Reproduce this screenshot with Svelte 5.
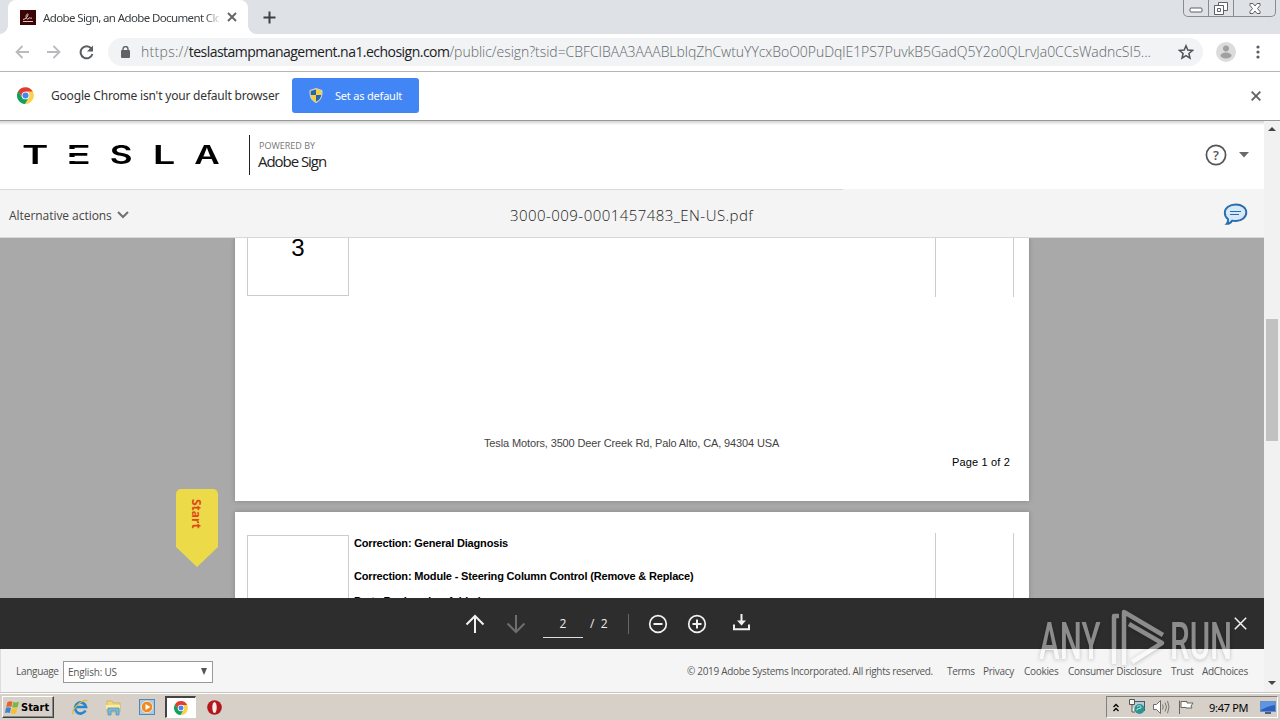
<script>
  const footerLinks = [
    { label: 'Terms', width: 26 },
    { label: 'Privacy', width: 31 },
    { label: 'Cookies', width: 34 },
    { label: 'Consumer Disclosure', width: 93 },
    { label: 'Trust', width: 21 },
    { label: 'AdChoices', width: 47 }
  ];
  const host = 'teslastampmanagement.na1.echosign.com';
  const path = '/public/esign?tsid=CBFCIBAA3AAABLblqZhCwtuYYcxBoO0PuDqlE1PS7PuvkB5GadQ5Y2o0QLrvJa0CCsWadncSI5...';
  const wordmark = ['T', 'E', 'S', 'L', 'A'];
</script>

{#snippet chromeLogo(size)}
  <svg width={size} height={size} viewBox="0 0 18 18">
    <path d="M9 5h7.9A9 9 0 0 0 1.2 4.5L5.5 11Z" fill="#e33b2e" />
    <path d="m12.5 11-4 7A9 9 0 0 0 16.900 5H9Z" fill="#fcd04b" />
    <path d="M5.500 11 1.300 4.300A9 9 0 0 0 8.500 18l4-7Z" fill="#159f5c" />
    <circle cx="9" cy="9" r="4.100" fill="#fff" />
    <circle cx="9" cy="9" r="3.200" fill="#4285f4" />
  </svg>
{/snippet}

<div class="screen">
  <div class="tabstrip">
    <div class="tab">
      <svg class="favicon" width="16" height="15" viewBox="0 0 16 15">
        <rect width="16" height="15" fill="#3b0505" />
        <path d="M3 9.500c3 0 5-3.500 5-5s-2 0-2 2 2 4 3 1.500c1-1 1 1 3 0M3 11.500h10" fill="none" stroke="#e9c5c0" />
      </svg>
      <span class="tab-title">Adobe Sign, an Adobe Document Clo</span>
      <svg class="tab-close" width="10" height="10" viewBox="0 0 10 10">
        <path d="m1 1 8 8M9 1 1 9" stroke="#5f6368" stroke-width="1.800" />
      </svg>
    </div>
    <svg class="tab-add" width="13" height="13" viewBox="0 0 13 13">
      <path d="M6.500.5v12M.5 6.500h12" stroke="#3c4043" stroke-width="2" />
    </svg>
    <div class="window-buttons">
      <span class="win min"><svg width="14" height="6" viewBox="0 0 14 6"><rect x="1" y="1" width="12" height="4" rx="1" fill="#fff" stroke="#5c6068" /></svg></span>
      <span class="win max"><svg width="14" height="13" viewBox="0 0 14 13"><g fill="#fff" stroke="#5c6068"><path d="M4.500.5h9v8h-9z" /><path d="M.5 3.500h9v9h-9z" /><path d="M3.500 6.500h3v3h-3z" /></g></svg></span>
      <span class="win close"><svg width="12" height="11" viewBox="0 0 12 11"><path d="M1 .5h3l2 2.500 2-2.500h3v2L8.500 5.500 11 8.500v2H8L6 8l-2 2.500H1v-2l2.500-3L1 2.500z" fill="#fff" stroke="#5c6068" /></svg></span>
    </div>
  </div>

  <div class="toolbar">
    <svg class="nav-back" width="14" height="14" viewBox="0 0 14 14"><path d="M14 7H1.500M7.500 1l-6 6 6 6" fill="none" stroke="#b9bbbe" stroke-width="1.800" /></svg>
    <svg class="nav-forward" width="14" height="14" viewBox="0 0 14 14"><path d="M0 7h12.500M6.500 1l6 6-6 6" fill="none" stroke="#b9bbbe" stroke-width="1.800" /></svg>
    <svg class="nav-reload" width="15" height="15" viewBox="0 0 15 15"><path d="M12.300 3.500A6 6 0 1 0 13.400 9" fill="none" stroke="#5a5d61" stroke-width="2" /><path d="M14 .5v6H8z" fill="#5a5d61" /></svg>
    <div class="omnibox">
      <svg class="lock" width="9" height="12" viewBox="0 0 9 12"><rect y="4" width="9" height="8" rx="1" fill="#5f6368" /><path d="M2 5V3a2.500 2.500 0 0 1 5 0v2" fill="none" stroke="#5f6368" stroke-width="1.400" /></svg>
      <span class="url"><span class="scheme">https://</span><span class="host">{host}</span><span class="path">{path}</span></span>
      <svg class="bookmark" width="16" height="16" viewBox="0 0 16 16"><path d="m8 1.800 1.800 4.300 4.700.4-3.600 3 1.100 4.600L8 11.700l-4 2.400 1.100-4.600-3.600-3 4.700-.4z" fill="none" stroke="#505357" stroke-width="1.500" /></svg>
    </div>
    <svg class="profile" width="20" height="20" viewBox="0 0 20 20"><circle cx="10" cy="10" r="10" fill="#dcdcdc" /><circle cx="10" cy="6.500" r="3" fill="#a0a0a0" /><ellipse cx="10" cy="13.500" rx="5.500" ry="3" fill="#a0a0a0" /></svg>
    <svg class="more" width="4" height="14" viewBox="0 0 4 14"><g fill="#5a5d61"><circle cx="2" cy="2" r="1.600" /><circle cx="2" cy="7" r="1.600" /><circle cx="2" cy="12" r="1.600" /></g></svg>
  </div>

  <div class="infobar">
    {@render chromeLogo(17)}
    <span class="infobar-text">Google Chrome isn't your default browser</span>
    <button class="default-button">
      <svg width="14" height="15" viewBox="0 0 14 15">
        <path d="M7 .5 13 2.500c.5 6-1.500 10-6 12C2.500 12.500.5 8.500 1 2.500z" fill="#f5d13d" stroke="#cfd5da" />
        <path d="M7 1.500V7H1.700L1.800 3zM7 7h5.300c-.5 3-2.300 5.300-5.300 6.500z" fill="#2864b4" />
      </svg>
      <span>Set as default</span>
    </button>
    <svg class="infobar-close" width="10" height="10" viewBox="0 0 10 10"><path d="m.7.700 8.600 8.600M9.300.7.7 9.300" stroke="#5f6368" stroke-width="1.900" /></svg>
  </div>

  <div class="content">
    <div class="app">
      <header class="brand-bar">
        <div class="wordmark" aria-label="Tesla">
          {#each wordmark as letter}
            <span class="letter letter-{letter}"><b>{letter}</b></span>
          {/each}
        </div>
        <div class="powered">
          <span class="powered-by">POWERED BY</span>
          <span class="powered-name">Adobe Sign</span>
        </div>
        <svg class="help" width="22" height="22" viewBox="0 0 22 22"><circle cx="11" cy="11" r="9.600" fill="none" stroke="#555" stroke-width="1.700" /><text x="11" y="15.500" text-anchor="middle">?</text></svg>
        <svg class="caret" width="10" height="6" viewBox="0 0 10 6"><path d="M0 0h10L5 5.500z" fill="#6a6a6a" /></svg>
      </header>

      <div class="doc-bar">
        <span class="alt-actions">Alternative actions</span>
        <svg class="chevron" width="12" height="8" viewBox="0 0 12 8"><path d="m1 1 5 5 5-5" fill="none" stroke="#707070" stroke-width="2" /></svg>
        <span class="doc-name">3000-009-0001457483_EN-US.pdf</span>
        <svg class="comment" width="25" height="23" viewBox="0 0 25 23">
          <path d="M12.800 1.500c6 0 10.500 3.400 10.500 8s-4.500 8.300-10.500 8.500c-1.500 0-2.500 0-3.600-.4-1.500 2.200-2.700 3.400-5.500 3.300 1.300-1.300 1.700-2.700 1.400-4.700-2-1.500-3.300-3.900-3.300-6.400 0-4.800 4.800-8.300 11-8.300z" fill="#d5e9fb" stroke="#2b6dab" stroke-width="1.900" />
          <path d="M7 8.500h11M7 11.500h9" stroke="#2f6ba4" stroke-width="1.200" />
        </svg>
      </div>

      <main class="viewer">
        <div class="page page-one">
          <div class="row">
            <div class="item-number">3</div>
            <div class="side-column"></div>
          </div>
          <p class="address">Tesla Motors, 3500 Deer Creek Rd, Palo Alto, CA, 94304 USA</p>
          <p class="page-number">Page 1 of 2</p>
        </div>
        <div class="page page-two">
          <div class="row">
            <div class="item-number"></div>
            <div class="corrections">
              <p class="c1">Correction: General Diagnosis</p>
              <p class="c2">Correction: Module - Steering Column Control (Remove &amp; Replace)</p>
              <p class="c3">Parts Replaced or Added</p>
            </div>
            <div class="side-column"></div>
          </div>
        </div>
        <div class="start-flag">
          <svg width="42" height="78" viewBox="0 0 42 78"><path d="M5 0h32a5 5 0 0 1 5 5v53L21 78 0 58V5a5 5 0 0 1 5-5z" fill="#edda48" /></svg>
          <span>Start</span>
        </div>
      </main>

      <div class="pager">
        <svg class="up" width="20" height="20" viewBox="0 0 20 20"><path d="M10 19V2M1.500 10.500 10 2l8.500 8.500" fill="none" stroke="#f2f2f2" stroke-width="2" /></svg>
        <svg class="down" width="20" height="20" viewBox="0 0 20 20"><path d="M10 1v17M1.500 9.500 10 18l8.500-8.500" fill="none" stroke="#6e6e6e" stroke-width="2" /></svg>
        <span class="page-input">2</span>
        <span class="page-total">/&nbsp; 2</span>
        <span class="divider"></span>
        <svg class="zoom-out" width="20" height="20" viewBox="0 0 20 20"><circle cx="10" cy="10" r="8.300" fill="none" stroke="#f2f2f2" stroke-width="1.700" /><path d="M5.500 10h9" stroke="#f2f2f2" stroke-width="2" /></svg>
        <svg class="zoom-in" width="20" height="20" viewBox="0 0 20 20"><circle cx="10" cy="10" r="8.300" fill="none" stroke="#f2f2f2" stroke-width="1.700" /><path d="M5.500 10h9M10 5.500v9" stroke="#f2f2f2" stroke-width="2" /></svg>
        <svg class="download" width="17" height="17" viewBox="0 0 17 17"><path d="M1 10.500v4.800h15v-4.800M8.500 0v8" fill="none" stroke="#f2f2f2" stroke-width="2" /><path d="M4 6.500h9l-4.500 5z" fill="#f2f2f2" /></svg>
        <svg class="pager-close" width="13" height="13" viewBox="0 0 13 13"><path d="m.8.800 11.400 11.400M12.200.8.800 12.200" stroke="#f4f4f4" stroke-width="1.500" /></svg>
      </div>

      <footer class="site-footer">
        <span class="language-label">Language</span>
        <div class="language-select">
          <span>English: US</span>
          <svg width="6" height="7" viewBox="0 0 6 7"><path d="M0 0h6L3 7z" fill="#555" /></svg>
        </div>
        <span class="copyright">© 2019 Adobe Systems Incorporated. All rights reserved.</span>
        <nav>
          {#each footerLinks as link}
            <span style="width: {link.width}px">{link.label}</span>
          {/each}
        </nav>
      </footer>
    </div>

    <div class="scrollbar">
      <svg width="8" height="4" viewBox="0 0 8 4"><path d="M0 4h8L4 0z" fill="#454545" /></svg>
      <div class="thumb"></div>
      <svg class="scroll-down" width="8" height="4" viewBox="0 0 8 4"><path d="M0 0h8L4 4z" fill="#454545" /></svg>
    </div>
  </div>

  <div class="taskbar">
    <div class="start-button">
      <svg width="16" height="15" viewBox="0 0 16 15">
        <path d="M2.500 2Q5 .5 7.500 1.700L6.300 7Q4 6 1.200 7z" fill="#e8622d" />
        <path d="M8.300 2Q11 3 14 1.700L12.700 7Q10 8 7.200 7.200z" fill="#7ab843" />
        <path d="M1 7.800Q3.500 6.800 6 8L4.800 13Q2.500 12 0 13z" fill="#3b83cc" />
        <path d="M7 8.200Q9.500 9 12.400 8L11.200 13.200Q8.500 14.300 5.700 13.200z" fill="#f5c22e" />
      </svg>
      <span>Start</span>
    </div>
    <svg class="launch ie" width="17" height="17" viewBox="0 0 17 17">
      <path d="M13.500 11.500A5.500 5.500 0 1 1 14 8H4" fill="none" stroke="#2487d2" stroke-width="2.700" />
      <path d="M1.500 15C-1.500 11 11-1 15.500 2" fill="none" stroke="#e1b93c" stroke-width="1.300" />
    </svg>
    <svg class="launch folder" width="17" height="17" viewBox="0 0 17 17">
      <path d="M2 2h5l1 2h7v9H2z" fill="#f2d874" stroke="#c9a94b" stroke-width=".7" />
      <path d="M1 6h14v4H1z" fill="#faeaa4" />
      <path d="M3 16V9h11v7h-3v-4H6v4z" fill="#77b8dc" stroke="#4c8fb8" stroke-width=".7" />
    </svg>
    <svg class="launch media" width="16" height="16" viewBox="0 0 16 16">
      <rect x=".5" y=".5" width="15" height="15" fill="#a9cbea" stroke="#5087b8" />
      <circle cx="8" cy="8" r="5.700" fill="#f08a1d" stroke="#fbe3b8" />
      <path d="m6.500 5 5 3-5 3z" fill="#fff" />
    </svg>
    <div class="task-active">{@render chromeLogo(14)}</div>
    <svg class="launch opera" width="15" height="15" viewBox="0 0 15 15"><circle cx="7.500" cy="7.500" r="7.300" fill="#b3161b" /><ellipse cx="7.500" cy="7.500" rx="2.200" ry="5.500" fill="#f7eded" /></svg>

    <div class="tray">
      <svg class="expand" width="6" height="9" viewBox="0 0 6 9"><path d="m.5 4 2.500-2.500L5.500 4m-5 4L3 5.500 5.500 8" fill="none" stroke="#000" stroke-width="1.300" /></svg>
      <svg class="network" width="17" height="16" viewBox="0 0 17 16"><rect x="3.500" y="2.500" width="12" height="9" fill="#b7ccd4" stroke="#41606c" /><path d="M.5.500h5v5h-5zM3 5v8h3" fill="#f6f6f0" stroke="#565650" /><circle cx="10.500" cy="10" r="5" fill="#2c9292" /><path d="M8 7.500q3-2 4 0t-2 2-2 2" fill="none" stroke="#b9e4d9" /></svg>
      <svg class="volume" width="17" height="14" viewBox="0 0 17 14"><path d="M.5 4.500h3l4-4v13l-4-4h-3z" fill="#fff" stroke="#6c6c66" /><path d="M9.500 4.500q1.500 2.500 0 5M12 2.500q3 4.500 0 9M14.500.8q3 6.200 0 12.400" fill="none" stroke="#77776f" /></svg>
      <svg class="flag" width="16" height="14" viewBox="0 0 16 14"><path d="M1.500 14V.5M3 1.500h6v1.500h6l-2 3 1 2H8V7.500H3z" fill="#fff" stroke="#66665f" /></svg>
      <span class="clock">9:47 PM</span>
      <svg class="desktop" width="16" height="13" viewBox="0 0 16 13"><rect x=".5" y=".5" width="15" height="10" fill="#2b60bd" stroke="#6a8fc6" /><path d="M1 1h14v3Q8 5 1 9z" fill="#5d95e2" /><path d="M5 12h6" stroke="#4c5f80" stroke-width="2" /></svg>
    </div>
  </div>

  <div class="watermark">
    <span class="any">ANY</span>
    <svg width="56" height="60" viewBox="0 0 56 60"><g fill="none" stroke="#fff" stroke-width="4.500" stroke-linejoin="round"><path d="M8 7H3v48" /><path d="M13 56V3l39 23" /><path d="m18 15 33 19-30 19" /></g></svg>
    <span class="run">RUN</span>
  </div>
</div>

<style>
  :global(body) {
    margin: 0;
    overflow: hidden;
  }

  .screen {
    position: relative;
    display: flex;
    flex-direction: column;
    width: 1280px;
    height: 720px;
    overflow: hidden;
    background: #fff;
    font-family: 'Noto Sans', 'Open Sans', sans-serif;
    color: #333;
  }

  .screen * {
    box-sizing: border-box;
  }

  svg {
    flex: none;
    display: block;
  }

  span,
  p {
    white-space: nowrap;
  }

  .tabstrip {
    display: flex;
    flex: none;
    height: 34px;
    background: #dee1e6;
  }

  .tab {
    position: relative;
    display: flex;
    align-items: center;
    width: 240px;
    margin-left: 8px;
    padding-left: 12px;
    background: #fff;
    border-radius: 8px 8px 0 0;
  }

  /* flared feet of the active tab */
  .tab::before,
  .tab::after {
    content: '';
    position: absolute;
    bottom: 0;
    left: -8px;
    width: 8px;
    height: 8px;
    background: radial-gradient(circle at 0 0, #dee1e6 7.500px, #fff 8px);
  }

  .tab::after {
    left: 100%;
    background: radial-gradient(circle at 100% 0, #dee1e6 7.500px, #fff 8px);
  }

  .tab-title {
    width: 176px;
    margin-left: 7px;
    font-size: 11.500px;
    letter-spacing: -0.620px;
    color: #3c4043;
    mask-image: linear-gradient(to right, #000 162px, rgba(0, 0, 0, 0.15) 176px);
  }

  .tab-close {
    margin-left: 8px;
  }

  .tab-add {
    margin: 11px 0 0 15px;
  }

  .window-buttons {
    display: flex;
    height: 17px;
    margin: 0 4px 0 auto;
    border: 1px solid #868b94;
    border-top: 0;
    border-radius: 0 0 5px 5px;
  }

  .win {
    display: flex;
    align-items: center;
    justify-content: center;
    width: 25px;
    border-right: 1px solid #868b94;
  }

  .min {
    padding-top: 4px;
  }

  .win.close {
    width: 41px;
    border-right: 0;
  }

  .toolbar {
    display: flex;
    flex: none;
    align-items: center;
    height: 38px;
    padding: 0 0 1px 15px;
    border-bottom: 1px solid #b4b5b7;
  }

  .nav-forward {
    margin-left: 18px;
  }

  .nav-reload {
    margin-left: 18px;
  }

  .omnibox {
    display: flex;
    align-items: center;
    width: 1095px;
    height: 28px;
    margin-left: 14px;
    padding-left: 13px;
    border-radius: 14px;
    background: #f1f3f4;
  }

  .url {
    width: 1012px;
    margin-left: 11px;
    font-family: 'Open Sans', sans-serif;
    font-size: 14px;
    line-height: 20px;
    font-weight: 300;
    color: #63676b;
  }

  .scheme {
    letter-spacing: 0.3px;
  }

  .host {
    font-weight: 400;
    letter-spacing: -0.53px;
    color: #202124;
  }

  .path {
    letter-spacing: -0.04px;
  }

  .bookmark {
    margin-left: 25px;
  }

  .profile {
    margin-left: 13px;
  }

  .more {
    margin-left: 20px;
  }

  .infobar {
    display: flex;
    flex: none;
    align-items: center;
    height: 49px;
    padding: 0 19px 1px 17px;
    border-bottom: 1px solid #989898;
  }

  .infobar-text {
    width: 229px;
    margin-left: 17px;
    font-size: 12px;
    letter-spacing: -0.190px;
  }

  .default-button {
    display: flex;
    align-items: center;
    width: 127px;
    height: 35px;
    margin: 0 0 0 12px;
    padding: 0 0 0 17px;
    border: 0;
    border-radius: 3px;
    background: #4285f4;
    color: #fff;
    font-family: inherit;
    font-size: 11px;
    letter-spacing: -0.2px;
  }

  .default-button span {
    margin-left: 12px;
  }

  .infobar-close {
    margin-left: auto;
  }

  .content {
    display: flex;
    flex: none;
    height: 571px;
  }

  .app {
    display: flex;
    flex-direction: column;
    width: 1264px;
    font-family: 'Open Sans', sans-serif;
  }

  .brand-bar {
    display: flex;
    flex: none;
    height: 68px;
    padding-left: 24px;
    background: linear-gradient(#d2d2d2, #fff 4px);
  }

  .wordmark {
    display: flex;
    gap: 20px;
    width: 225px;
    padding-top: 25px;
  }

  .letter {
    position: relative;
    display: flex;
    justify-content: center;
    width: 23px;
    height: 18px;
    font-family: Inter, sans-serif;
    font-size: 25px;
    line-height: 19px;
    color: #000;
  }

  .letter b {
    font-weight: 600;
    transform: scaleX(1.6);
  }

  .letter-A b,
  .letter-S b {
    transform: scaleX(1.4);
  }

  /* the E of the wordmark is three loose bars */
  .letter-E::before,
  .letter-E::after {
    content: '';
    position: absolute;
    z-index: 1;
    left: -1px;
    top: 3px;
    width: 25px;
    height: 4px;
    background: #fff;
  }

  .letter-E::after {
    top: 11px;
  }

  .powered {
    display: flex;
    flex-direction: column;
    width: 80px;
    height: 40px;
    margin-top: 14px;
    padding: 4px 0 0 9px;
    border-left: 1px solid #222;
  }

  .powered-by {
    font-size: 9px;
    line-height: 13px;
    letter-spacing: 0;
    color: #777;
  }

  .powered-name {
    margin-left: -1px;
    font-size: 15px;
    line-height: 19px;
    letter-spacing: -1.050px;
    color: #222;
  }

  .help {
    margin: 23px 0 0 auto;
  }

  .help text {
    font: 600 13px 'Open Sans', sans-serif;
    fill: #555;
  }

  .caret {
    margin: 31px 15px 0 12px;
  }

  .doc-bar {
    display: flex;
    flex: none;
    align-items: center;
    height: 49px;
    padding: 4px 16px 0 9px;
    border-bottom: 1px solid #d8d8d8;
    background: linear-gradient(#d9d9d9, #d9d9d9) 0 0 / 843px 1px no-repeat #f4f4f4;
  }

  .alt-actions {
    width: 103px;
    font-size: 12px;
    letter-spacing: -0.05px;
    color: #444;
  }

  .chevron {
    margin-left: 5px;
  }

  .doc-name {
    width: 244px;
    margin-left: 381px;
    font-size: 15px;
    font-weight: 300;
    letter-spacing: 0.45px;
    color: #222;
  }

  .comment {
    margin: -2px 0 0 auto;
  }

  .viewer {
    position: relative;
    flex: none;
    height: 360px;
    overflow: hidden;
    background: #a9a9a9;
    font-family: 'Liberation Sans', Arial, sans-serif;
    color: #000;
  }

  .page {
    width: 794px;
    margin: 0 0 11px 235px;
    background: #fff;
    box-shadow: 0 0 5px rgba(0, 0, 0, 0.22);
  }

  .page-one {
    height: 263px;
  }

  .page-two {
    height: 200px;
    padding-top: 21px;
  }

  .row {
    display: flex;
    height: 59px;
    padding: 0 15px 0 12px;
  }

  .item-number {
    width: 102px;
    height: 58px;
    border: 1px solid #ccc;
    border-top: 0;
    font-size: 24px;
    line-height: 20px;
    text-align: center;
  }

  .side-column {
    width: 79px;
    margin-left: auto;
    border: solid #ccc;
    border-width: 0 1px;
  }

  .page p {
    margin: 0;
    font-size: 11px;
    line-height: 14px;
  }

  .page .address {
    padding: 139px 0 0 249px;
    letter-spacing: -0.13px;
    color: #444;
  }

  .page .page-number {
    padding: 5px 19px 0 0;
    letter-spacing: 0.15px;
    text-align: right;
  }

  .page-two .row {
    height: 160px;
  }

  .page-two .item-number {
    height: 150px;
    margin-top: 2px;
    border-top: 1px solid #ccc;
  }

  .corrections {
    padding: 3px 0 0 5px;
    font-weight: 700;
    letter-spacing: -0.17px;
  }

  .page .c2 {
    margin-top: 19px;
  }

  .page .c3 {
    margin-top: 11px;
  }

  .start-flag {
    position: absolute;
    left: 176px;
    top: 251px;
    width: 42px;
    height: 78px;
  }

  .start-flag span {
    position: absolute;
    left: 12px;
    top: 10px;
    writing-mode: vertical-rl;
    font: 700 12px / 17px 'Open Sans', sans-serif;
    color: #e0481c;
  }

  .pager {
    display: flex;
    flex: none;
    align-items: center;
    height: 51px;
    padding: 0 17px 0 465px;
    background: #2d2d2d;
    color: #eee;
    font-size: 12px;
  }

  .down {
    margin-left: 21px;
  }

  .page-input {
    width: 40px;
    height: 28px;
    margin-left: 17px;
    border-bottom: 1px solid #ddd;
    line-height: 27px;
    text-align: center;
  }

  .page-total {
    width: 20px;
    margin-left: 7px;
  }

  .divider {
    width: 1px;
    height: 20px;
    margin-left: 18px;
    background: #666;
  }

  .zoom-out {
    margin-left: 19px;
  }

  .zoom-in {
    margin-left: 19px;
  }

  .download {
    margin: -2px 0 0 26px;
  }

  .pager-close {
    margin-left: auto;
  }

  .site-footer {
    display: flex;
    flex: none;
    align-items: center;
    height: 43px;
    padding: 0 15px 0 16px;
    border-left: 1px solid #ddd;
    background: #f5f5f5;
    font-size: 10px;
    color: #555;
  }

  .language-label {
    width: 47px;
    margin-left: -1px;
    letter-spacing: -0.3px;
  }

  .language-select {
    display: flex;
    align-items: center;
    justify-content: space-between;
    width: 150px;
    height: 22px;
    padding: 0 5px 0 4px;
    margin-top: 2px;
    border: 1px solid #999;
    background: #fff;
    letter-spacing: -0.2px;
  }

  .copyright {
    width: 246px;
    margin-left: auto;
    letter-spacing: -0.31px;
  }

  nav {
    display: flex;
    gap: 10px;
    margin-left: 14px;
    letter-spacing: -0.3px;
  }

  .scrollbar {
    display: flex;
    flex-direction: column;
    align-items: center;
    width: 16px;
    padding: 6px 0 7px;
    background: #f1f1f1;
  }

  .thumb {
    width: 12px;
    height: 122px;
    margin-top: 188px;
    background: #c1c1c1;
  }

  .scroll-down {
    margin-top: auto;
  }

  .taskbar {
    display: flex;
    flex: none;
    align-items: center;
    height: 28px;
    padding: 1px 2px 0;
    border-top: 1px solid #c9c6c0;
    box-shadow: inset 0 1px #fff;
    background: #d6d0c8;
  }

  .start-button {
    display: flex;
    align-items: center;
    width: 52px;
    height: 22px;
    padding-left: 2px;
    border: 1px solid #fff;
    border-color: #fff #404040 #404040 #fff;
    box-shadow: inset -1px -1px #888;
    color: #000;
    font: 700 11px 'DejaVu Sans Condensed', 'DejaVu Sans', sans-serif;
  }

  .ie {
    margin-left: 18px;
  }

  .folder {
    margin-left: 16px;
  }

  .media {
    margin-left: 17px;
  }

  .task-active {
    display: flex;
    align-items: center;
    justify-content: center;
    width: 31px;
    height: 22px;
    margin-left: 10px;
    border: 2px solid #444;
    border-right: 1px solid #fff;
    border-bottom: 1px solid #fff;
    background: #fff;
  }

  .opera {
    margin-left: 11px;
  }

  .tray {
    display: flex;
    align-items: center;
    width: 172px;
    height: 22px;
    margin-left: auto;
    padding-left: 6px;
    border: 1px solid #808080;
    border-color: #808080 #fff #fff #808080;
    color: #000;
  }

  .network {
    margin-left: 10px;
  }

  .volume {
    margin-left: 7px;
  }

  .flag {
    margin-left: 8px;
  }

  .clock {
    width: 40px;
    margin-left: 15px;
    font-size: 11px;
    letter-spacing: -0.3px;
  }

  .desktop {
    margin-left: 11px;
  }

  .watermark {
    position: absolute;
    left: 1039px;
    top: 609px;
    display: flex;
    width: 200px;
    height: 64px;
    opacity: 0.45;
    color: #fff;
    filter: drop-shadow(0 1px 2px rgba(0, 0, 0, 0.5));
    pointer-events: none;
  }

  .watermark svg {
    margin: 0 0 0 8px;
  }

  .watermark span {
    width: 64px;
    margin-top: 7px;
    font: 500 52px / 52px Roboto, sans-serif;
    transform: scaleX(0.6);
    transform-origin: 0 0;
  }

  .watermark .run {
    margin-left: 3px;
  }
</style>
